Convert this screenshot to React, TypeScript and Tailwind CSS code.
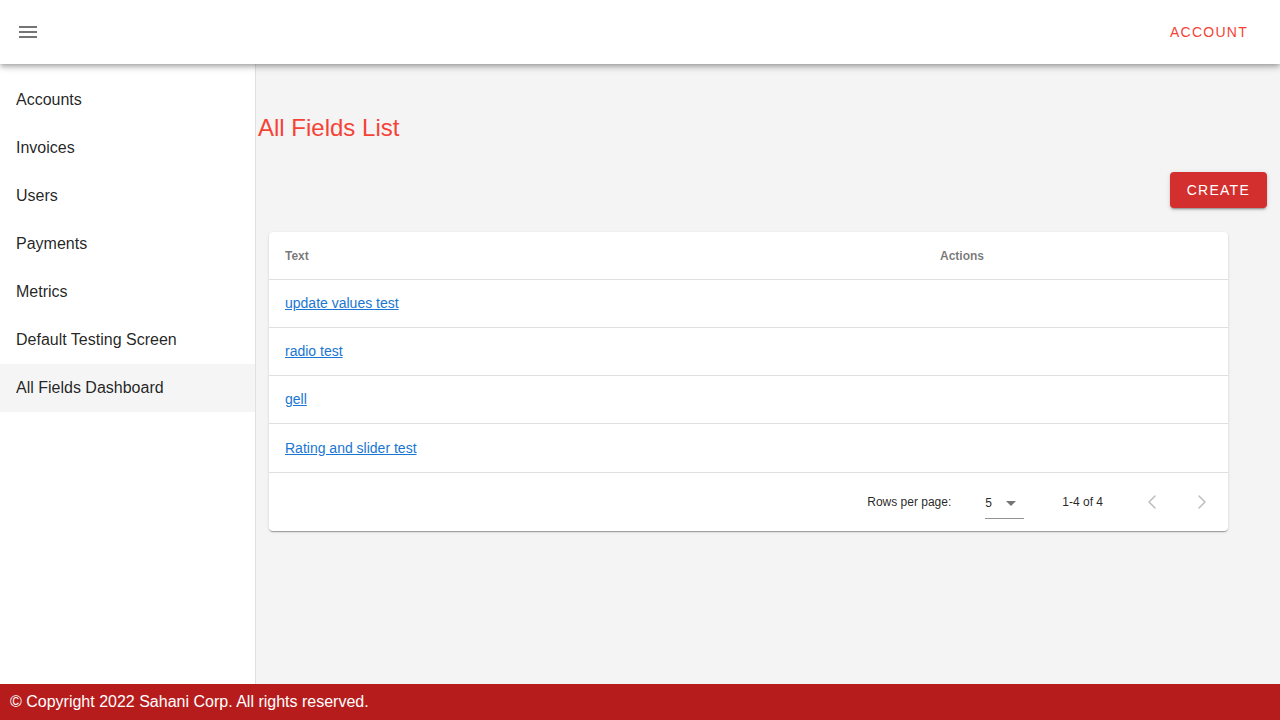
import { ChevronLeft, ChevronRight } from 'lucide-react';

const navItems = [
  "Accounts",
  "Invoices",
  "Users",
  "Payments",
  "Metrics",
  "Default Testing Screen",
  "All Fields Dashboard",
];

const rows = ["update values test", "radio test", "gell", "Rating and slider test"];

const MenuIcon = () => (
  <svg width="24" height="24" viewBox="0 0 24 24" fill="#757575">
    <path d="M3 18h18v-2H3v2zm0-5h18v-2H3v2zm0-7v2h18V6H3z" />
  </svg>
);

const App = () => {
  return (
    <div className="h-[720px] flex flex-col bg-[#f4f4f4] font-['Liberation_Sans',Arial,sans-serif] overflow-hidden">
      <header className="relative z-10 h-16 shrink-0 bg-white flex items-center justify-between pl-4 pr-[32px] shadow-[0_2px_4px_-1px_rgba(0,0,0,0.2),0_4px_5px_0_rgba(0,0,0,0.14),0_1px_10px_0_rgba(0,0,0,0.12)]">
        <button className="w-6 h-6 flex items-center justify-center">
          <MenuIcon />
        </button>
        <span className="text-[14px] tracking-[1.25px] text-[#f44336]">ACCOUNT</span>
      </header>

      <div className="flex flex-1 min-h-0">
        <aside className="w-[256px] shrink-0 bg-white border-r border-[#e0e0e0] pt-3">
          {navItems.map((item, index) => (
            <div
              key={item}
              className={`h-12 flex items-center px-4 text-[16px] text-[rgba(0,0,0,0.87)] ${index === navItems.length - 1 ? 'bg-[#f5f5f5]' : ''}`}
            >
              {item}
            </div>
          ))}
        </aside>

        <main className="flex-1 pl-[2px] pt-[52px]">
          <h1 className="text-[24px] leading-[24px] text-[#f44336] h-6">All Fields List</h1>
          <div className="flex justify-end pr-[13px] mt-[32px]">
            <button className="h-9 px-[17px] rounded bg-[#d32f2f] text-white text-[14px] tracking-[1.25px] shadow-[0_3px_1px_-2px_rgba(0,0,0,0.2),0_2px_2px_0_rgba(0,0,0,0.14),0_1px_5px_0_rgba(0,0,0,0.12)]">
              CREATE
            </button>
          </div>

          <div className="ml-[11px] mt-6 w-[959px] bg-white rounded shadow-[0_2px_1px_-1px_rgba(0,0,0,0.2),0_1px_1px_0_rgba(0,0,0,0.14),0_1px_3px_0_rgba(0,0,0,0.12)]">
            <div className="h-12 flex items-center border-b border-[#e0e0e0] text-[12px] font-bold text-[rgba(0,0,0,0.54)]">
              <div className="w-[671px] pl-4">Text</div>
              <div>Actions</div>
            </div>
            {rows.map((row, index) => (
              <div
                key={row}
                className={`${index === rows.length - 1 ? 'h-[49px] pt-px' : 'h-12'} flex items-center border-b border-[#e0e0e0] pl-4 text-[14px]`}
              >
                <a href="#" className="text-[#1976d2] underline">{row}</a>
              </div>
            ))}
            <div className="h-[58px] flex items-center text-[12px] text-[rgba(0,0,0,0.87)]">
              <div className="flex-1" />
              <span>Rows per page:</span>
              <div className="ml-[34px] w-[39px] h-[30px] flex items-center justify-between border-b border-[rgba(0,0,0,0.42)] mt-[3px]">
                <span>5</span>
                <svg width="24" height="24" viewBox="0 0 24 24" fill="#757575" className="mr-px">
                  <path d="M7 10l5 5 5-5z" />
                </svg>
              </div>
              <span className="ml-[38px]">1-4 of 4</span>
              <div className="ml-[37px] flex gap-[26px] pr-[14px] text-[rgba(0,0,0,0.26)]">
                <ChevronLeft size={24} strokeWidth={1.5} />
                <ChevronRight size={24} strokeWidth={1.5} />
              </div>
            </div>
          </div>
        </main>
      </div>

      <footer className="h-9 shrink-0 bg-[#b71c1c] flex items-center pl-[10px] text-white text-[16px]">
        © Copyright 2022 Sahani Corp. All rights reserved.
      </footer>
    </div>
  );
};

export default App;
